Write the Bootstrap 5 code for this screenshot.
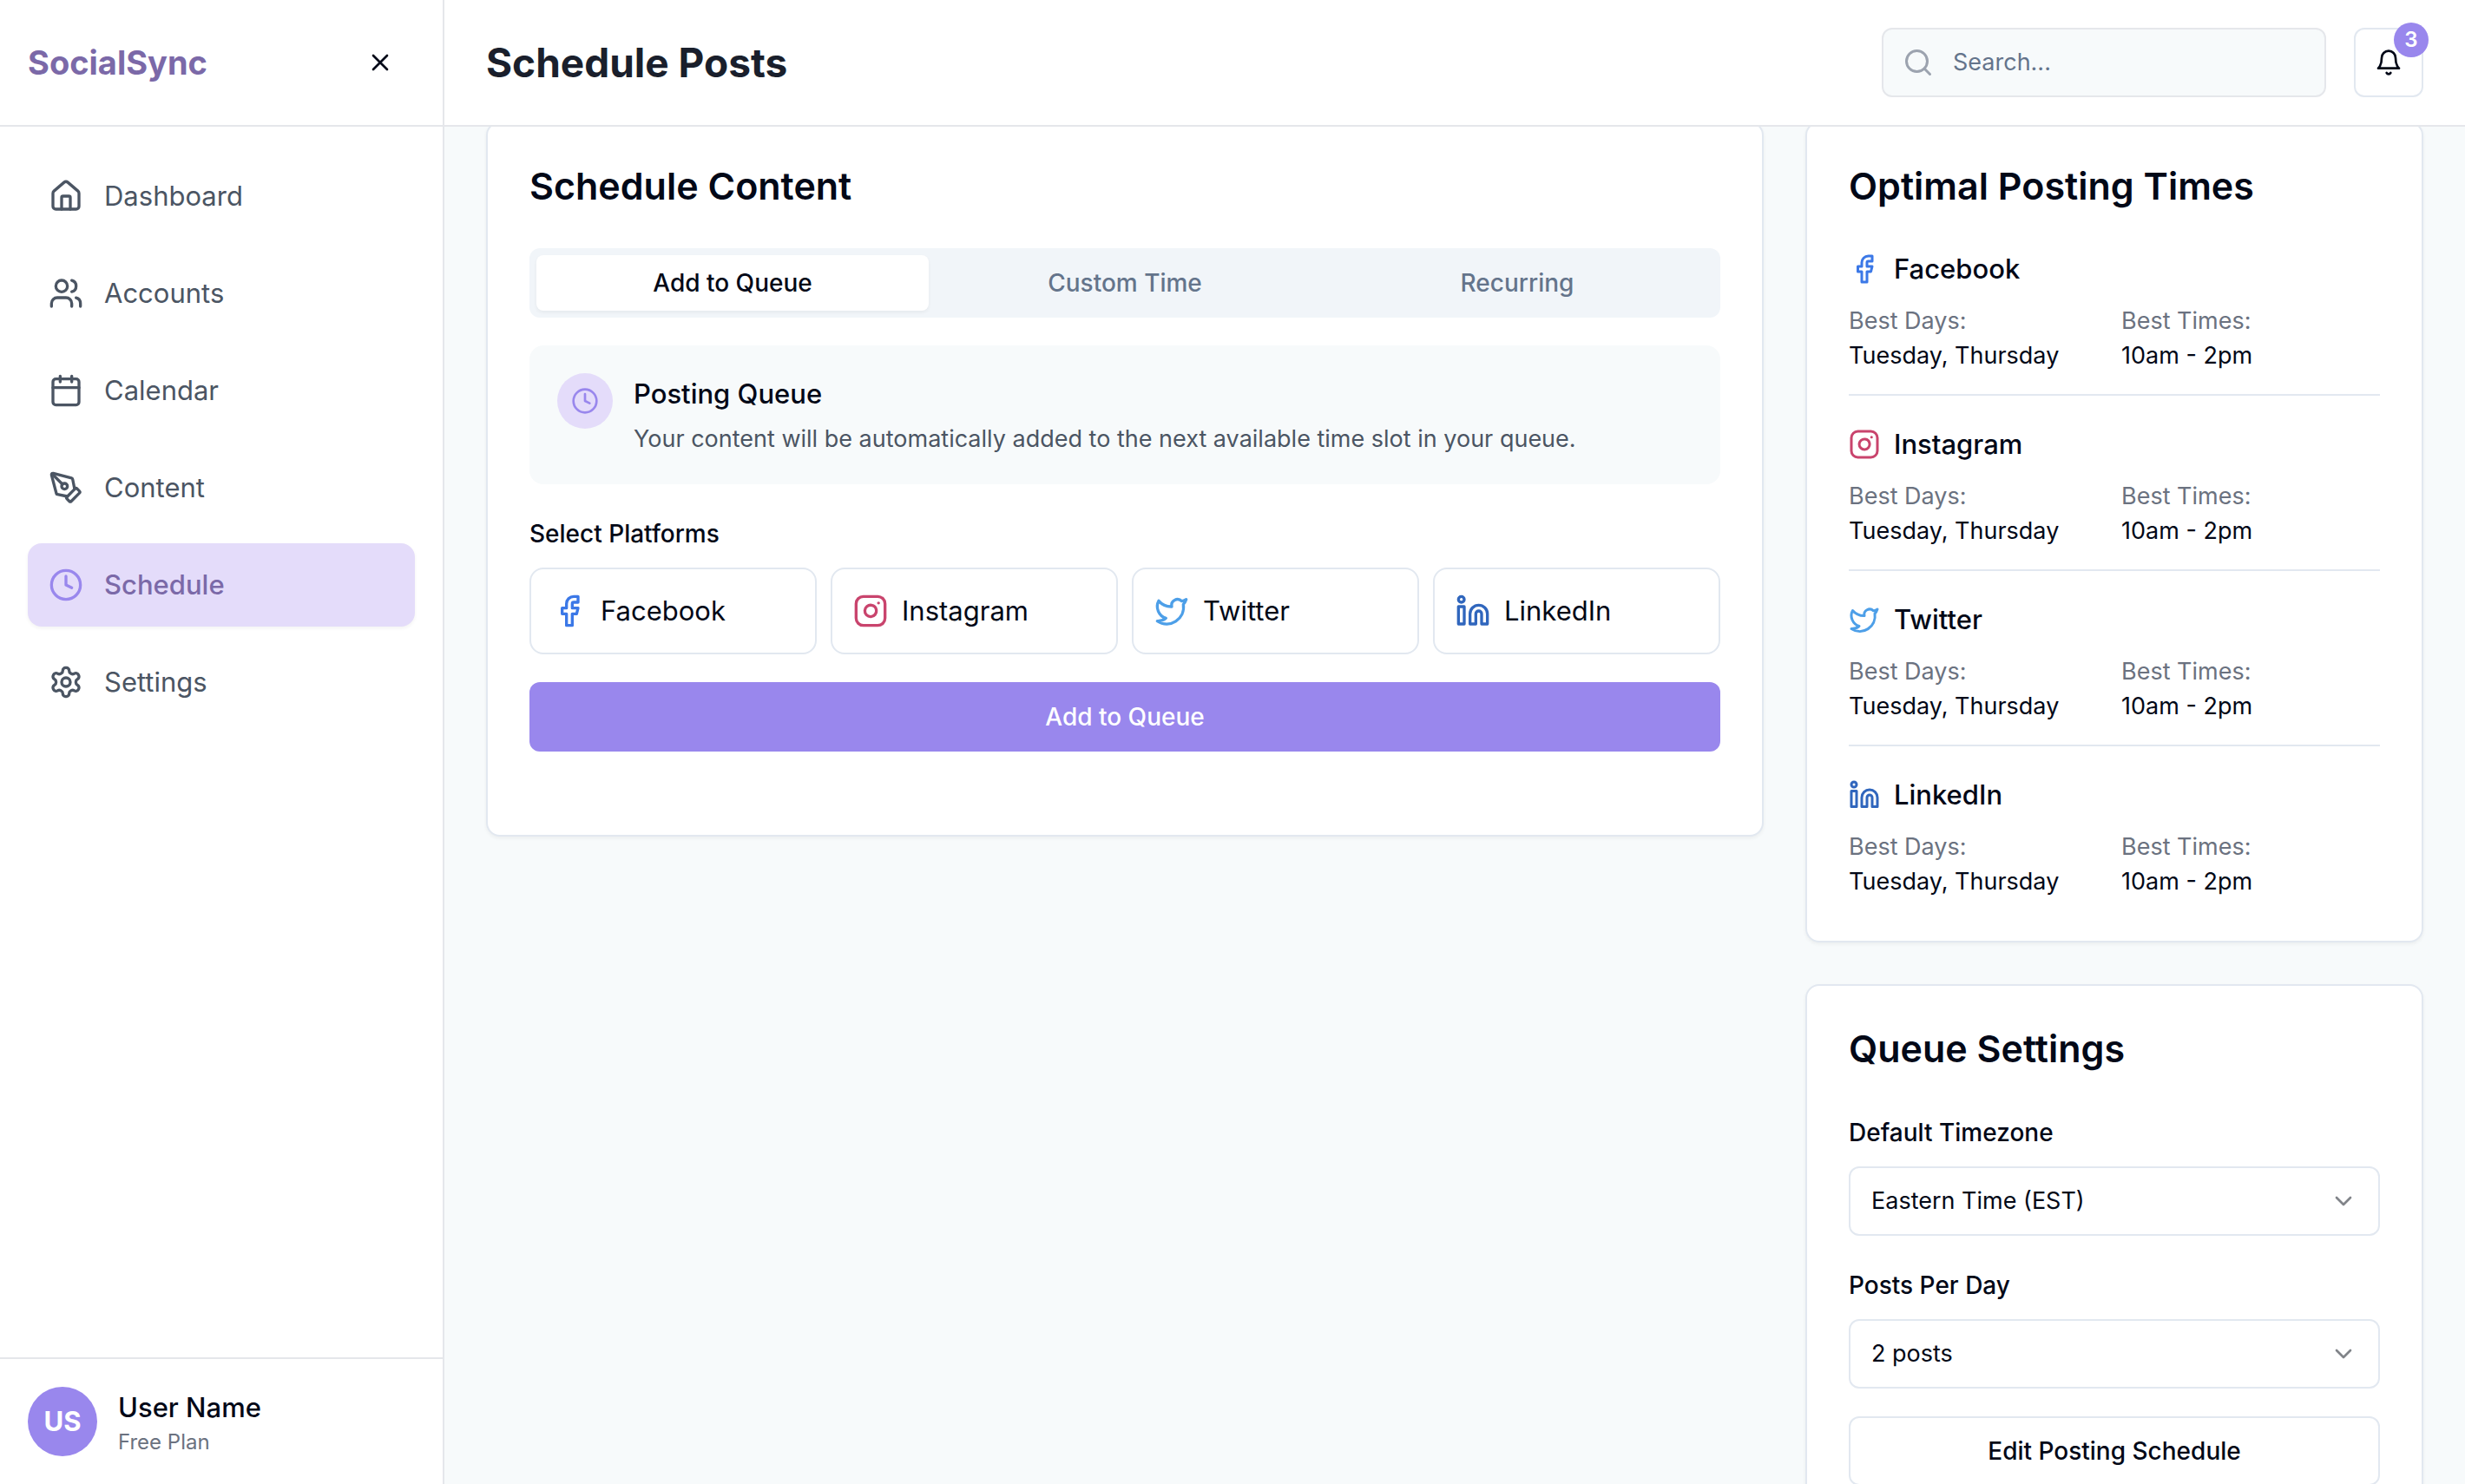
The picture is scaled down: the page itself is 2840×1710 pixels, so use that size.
<!DOCTYPE html>
<html lang="en">
<head>
<meta charset="utf-8">
<meta name="viewport" content="width=device-width, initial-scale=1">
<title>SocialSync – Schedule Posts</title>
<link href="https://cdn.jsdelivr.net/npm/bootstrap@5.3.0/dist/css/bootstrap.min.css" rel="stylesheet">
<style>
  :root {
    --ink: #020817;
    --line: #e2e8f0;
    --line-gray: #e5e7eb;
    --brand: #9987ed;
    --brand-deep: #7b69a8;
    --brand-soft: #e4dcfa;
    --canvas: #f7fafb;
  }
  body { font-family: Inter, "Noto Sans", sans-serif; font-size: 31px; line-height: 48px; color: var(--ink); background: var(--canvas); }
  svg { fill: none; stroke: currentColor; stroke-width: 2; stroke-linecap: round; stroke-linejoin: round; flex: none; display: block; }
  .ico-32 { width: 32px; height: 32px; }
  .ico-36 { width: 36px; height: 36px; }
  .ico-40 { width: 40px; height: 40px; }
  .shell { height: 100vh; }
  .text-28 { font-size: 28px; line-height: 40px; }
  .text-27 { font-size: 27px; line-height: 40px; }
  .text-24 { font-size: 24px; line-height: 32px; }
  .gap-16 { gap: 16px; }
  .gap-24 { gap: 24px; }
  .gap-32 { gap: 32px; }
  .gap-48 { gap: 48px; }

  .side-panel { width: 512px; border-right: 2px solid var(--line-gray); }
  .bar { height: 146px; padding: 0 32px; border-bottom: 2px solid var(--line-gray); flex: none; }
  .bar-top { padding: 0 48px; }
  .brand-name { font-size: 38px; line-height: 56px; color: var(--brand-deep); }
  .page-title { font-size: 46px; line-height: 64px; color: #1a1f2c; }
  .square-btn { width: 80px; height: 80px; padding: 0; border-radius: 12px; color: var(--ink); }
  .square-btn.outlined { border: 2px solid var(--line); background: #fff; }
  .side-nav { padding: 32px; }
  .side-nav .nav-link { padding: 24px; border-radius: 16px; color: #4b5563; }
  .side-nav .nav-link.active { background: var(--brand-soft); color: var(--brand-deep); font-weight: 500; box-shadow: 0 2px 4px rgba(0,0,0,.05); }
  .side-nav .nav-link.active svg { color: var(--brand); }
  .side-user { padding: 32px; border-top: 2px solid var(--line-gray); }
  .user-name { font-weight: 500; }
  .avatar { width: 80px; height: 80px; background: var(--brand); }
  .muted { color: #6b7280; }

  .search-box { width: 512px; height: 80px; border: 2px solid var(--line-gray); border-radius: 12px; background: var(--canvas); padding: 0 22px; gap: 22px; }
  .search-box svg { color: #9ca3af; }
  .search-box input { min-width: 0; outline: 0; color: var(--ink); }
  .search-box input::placeholder { color: #64748b; opacity: 1; }
  .count-badge { top: -8px; right: -8px; width: 40px; height: 40px; background: var(--brand); color: #fff; font-weight: 600; }

  .content-area { padding: 48px; scrollbar-width: none; }
  .content-area::-webkit-scrollbar { display: none; }
  .main-row { --bs-gutter-x: 48px; }
  .tight-row { --bs-gutter-x: 16px; }
  .panel { border: 2px solid var(--line); border-radius: 16px; box-shadow: 0 2px 4px rgba(0,0,0,.05); padding: 48px; color: var(--ink); }
  .panel-tall { padding-bottom: 96px; }
  .panel-title { font-size: 43px; line-height: 48px; font-weight: 600; margin-bottom: 48px; }
  .tab-strip { background: #f1f5f9; border-radius: 12px; padding: 8px; }
  .tab-strip .nav-link { height: 64px; padding: 0; border-radius: 8px; font-weight: 500; color: #64748b; }
  .tab-strip .nav-link.active { background: #fff; color: var(--ink); box-shadow: 0 2px 4px rgba(0,0,0,.05); }
  .queue-note { background: var(--canvas); border-radius: 16px; padding: 32px; }
  .note-icon { width: 64px; height: 64px; background: var(--brand-soft); color: var(--brand); }
  .note-title { font-size: 31px; line-height: 48px; font-weight: 500; margin-bottom: 8px; }
  .note-text { color: #4b5563; }
  .field-label { font-size: 28px; line-height: 40px; font-weight: 500; }
  .platform-btn { padding: 24px; border: 2px solid var(--line); border-radius: 16px; background: #fff; font-size: 31px; line-height: 48px; color: var(--ink); }
  .wide-btn { height: 80px; border-radius: 12px; font-size: 28px; line-height: 40px; font-weight: 500; }
  .wide-btn.solid { background: var(--brand); color: #fff; }
  .wide-btn.outlined { border: 2px solid var(--line); background: #fff; color: var(--ink); }
  .c-facebook { color: #3b78e7; }
  .c-instagram { color: #c9446d; }
  .c-twitter { color: #4d9fe8; }
  .c-linkedin { color: #3066bd; }
  .slot-item + .slot-item { padding-top: 32px; }
  .slot-item:not(:last-child) { padding-bottom: 24px; border-bottom: 2px solid var(--line); }
  .slot-name { font-size: 31px; line-height: 48px; font-weight: 500; margin-bottom: 16px; }
  .pick { height: 80px; border: 2px solid var(--line); border-radius: 12px; padding: 0 80px 0 24px; font-size: 27px; line-height: 40px; color: var(--ink);
    --bs-form-select-bg-img: url("data:image/svg+xml,%3csvg xmlns='http://www.w3.org/2000/svg' viewBox='0 0 24 24' fill='none' stroke='%23818489' stroke-width='2' stroke-linecap='round' stroke-linejoin='round'%3e%3cpath d='m6 9 6 6 6-6'/%3e%3c/svg%3e");
    background-position: right 24px center; background-size: 32px 32px; }
</style>
</head>
<body>
<svg class="d-none" aria-hidden="true">
  <symbol id="i-x" viewBox="0 0 24 24"><path d="M18 6 6 18M6 6l12 12"/></symbol>
  <symbol id="i-home" viewBox="0 0 24 24"><path d="M15 21v-8a1 1 0 0 0-1-1h-4a1 1 0 0 0-1 1v8"/><path d="M3 10a2 2 0 0 1 .709-1.528l7-5.999a2 2 0 0 1 2.582 0l7 5.999A2 2 0 0 1 21 10v9a2 2 0 0 1-2 2H5a2 2 0 0 1-2-2z"/></symbol>
  <symbol id="i-users" viewBox="0 0 24 24"><path d="M16 21v-2a4 4 0 0 0-4-4H6a4 4 0 0 0-4 4v2"/><circle cx="9" cy="7" r="4"/><path d="M22 21v-2a4 4 0 0 0-3-3.87M16 3.13a4 4 0 0 1 0 7.75"/></symbol>
  <symbol id="i-calendar" viewBox="0 0 24 24"><path d="M8 2v4M16 2v4"/><rect width="18" height="18" x="3" y="4" rx="2"/><path d="M3 10h18"/></symbol>
  <symbol id="i-pen" viewBox="0 0 24 24"><path d="M15.707 21.293a1 1 0 0 1-1.414 0l-1.586-1.586a1 1 0 0 1 0-1.414l5.586-5.586a1 1 0 0 1 1.414 0l1.586 1.586a1 1 0 0 1 0 1.414z"/><path d="m18 13-1.375-6.874a1 1 0 0 0-.746-.776L3.235 2.028a1 1 0 0 0-1.207 1.207L5.35 15.879a1 1 0 0 0 .776.746L13 18"/><path d="m2.3 2.3 7.286 7.286"/><circle cx="11" cy="11" r="2"/></symbol>
  <symbol id="i-clock" viewBox="0 0 24 24"><circle cx="12" cy="12" r="10"/><path d="M12 6v6l4 2"/></symbol>
  <symbol id="i-gear" viewBox="0 0 24 24"><path d="M12.22 2h-.44a2 2 0 0 0-2 2v.18a2 2 0 0 1-1 1.73l-.43.25a2 2 0 0 1-2 0l-.15-.08a2 2 0 0 0-2.73.73l-.22.38a2 2 0 0 0 .73 2.73l.15.1a2 2 0 0 1 1 1.72v.51a2 2 0 0 1-1 1.74l-.15.09a2 2 0 0 0-.73 2.73l.22.38a2 2 0 0 0 2.73.73l.15-.08a2 2 0 0 1 2 0l.43.25a2 2 0 0 1 1 1.73V20a2 2 0 0 0 2 2h.44a2 2 0 0 0 2-2v-.18a2 2 0 0 1 1-1.73l.43-.25a2 2 0 0 1 2 0l.15.08a2 2 0 0 0 2.73-.73l.22-.39a2 2 0 0 0-.73-2.73l-.15-.08a2 2 0 0 1-1-1.74v-.5a2 2 0 0 1 1-1.74l.15-.09a2 2 0 0 0 .73-2.73l-.22-.38a2 2 0 0 0-2.73-.73l-.15.08a2 2 0 0 1-2 0l-.43-.25a2 2 0 0 1-1-1.73V4a2 2 0 0 0-2-2z"/><circle cx="12" cy="12" r="3"/></symbol>
  <symbol id="i-search" viewBox="0 0 24 24"><circle cx="11" cy="11" r="8"/><path d="m21 21-4.3-4.3"/></symbol>
  <symbol id="i-bell" viewBox="0 0 24 24"><path d="M10.268 21a2 2 0 0 0 3.464 0"/><path d="M6 8a6 6 0 0 1 12 0c0 7 3 9 3 9H3s3-2 3-9"/></symbol>
  <symbol id="i-facebook" viewBox="0 0 24 24"><path d="M18 2h-3a5 5 0 0 0-5 5v3H7v4h3v8h4v-8h3l1-4h-4V7a1 1 0 0 1 1-1h3z"/></symbol>
  <symbol id="i-instagram" viewBox="0 0 24 24"><rect width="20" height="20" x="2" y="2" rx="5"/><path d="M16 11.37A4 4 0 1 1 12.63 8 4 4 0 0 1 16 11.37z"/><path d="M17.5 6.5h.01"/></symbol>
  <symbol id="i-twitter" viewBox="0 0 24 24"><path d="M22 4s-.7 2.1-2 3.4c1.6 10-9.4 17.3-18 11.6 2.2.1 4.4-.6 6-2C3 15.5.5 9.6 3 5c2.2 2.6 5.6 4.1 9 4-.9-4.2 4-6.6 7-3.8 1.1 0 3-1.2 3-1.2z"/></symbol>
  <symbol id="i-linkedin" viewBox="0 0 24 24"><path d="M16 8a6 6 0 0 1 6 6v7h-4v-7a2 2 0 0 0-4 0v7h-4v-7a6 6 0 0 1 6-6z"/><rect width="4" height="12" x="2" y="9"/><circle cx="4" cy="4" r="2"/></symbol>
</svg>

<div class="shell d-flex overflow-hidden">
  <aside class="side-panel d-flex flex-column flex-shrink-0 bg-white">
    <div class="bar d-flex align-items-center justify-content-between">
      <div class="brand-name fw-bold">SocialSync</div>
      <button type="button" class="btn square-btn d-flex align-items-center justify-content-center" aria-label="Close sidebar"><svg class="ico-32"><use href="#i-x"/></svg></button>
    </div>
    <nav class="side-nav nav flex-column flex-nowrap flex-grow-1 gap-16">
      <a class="nav-link d-flex align-items-center gap-24" href="#"><svg class="ico-40"><use href="#i-home"/></svg>Dashboard</a>
      <a class="nav-link d-flex align-items-center gap-24" href="#"><svg class="ico-40"><use href="#i-users"/></svg>Accounts</a>
      <a class="nav-link d-flex align-items-center gap-24" href="#"><svg class="ico-40"><use href="#i-calendar"/></svg>Calendar</a>
      <a class="nav-link d-flex align-items-center gap-24" href="#"><svg class="ico-40"><use href="#i-pen"/></svg>Content</a>
      <a class="nav-link active d-flex align-items-center gap-24" href="#" aria-current="page"><svg class="ico-40"><use href="#i-clock"/></svg>Schedule</a>
      <a class="nav-link d-flex align-items-center gap-24" href="#"><svg class="ico-40"><use href="#i-gear"/></svg>Settings</a>
    </nav>
    <div class="side-user d-flex align-items-center gap-24">
      <div class="avatar rounded-circle d-flex align-items-center justify-content-center text-white fw-bold">US</div>
      <div>
        <div class="user-name">User Name</div>
        <div class="text-24 muted">Free Plan</div>
      </div>
    </div>
  </aside>

  <div class="d-flex flex-column flex-grow-1 overflow-hidden">
    <header class="bar bar-top d-flex align-items-center justify-content-between bg-white">
      <h1 class="page-title fw-bold mb-0">Schedule Posts</h1>
      <div class="d-flex align-items-center gap-32">
        <label class="search-box d-flex align-items-center">
          <svg class="ico-36"><use href="#i-search"/></svg>
          <input type="search" class="text-27 border-0 bg-transparent p-0 flex-grow-1" placeholder="Search..." aria-label="Search">
        </label>
        <button type="button" class="btn square-btn outlined position-relative d-flex align-items-center justify-content-center" aria-label="Notifications">
          <svg class="ico-32"><use href="#i-bell"/></svg>
          <span class="count-badge text-24 rounded-circle position-absolute d-flex align-items-center justify-content-center">3</span>
        </button>
      </div>
    </header>

    <main class="content-area flex-grow-1 overflow-auto" id="content">
      <div class="row main-row align-items-start">
        <div class="col-lg-8">
          <section class="panel panel-tall bg-white">
            <h2 class="panel-title">Schedule Content</h2>
            <div class="d-flex flex-column gap-32">
              <div class="tab-strip nav nav-pills nav-fill flex-nowrap" role="tablist">
                <button type="button" class="nav-link active text-28 w-100" role="tab" aria-selected="true">Add to Queue</button>
                <button type="button" class="nav-link text-28 w-100" role="tab" aria-selected="false">Custom Time</button>
                <button type="button" class="nav-link text-28 w-100" role="tab" aria-selected="false">Recurring</button>
              </div>
              <div class="queue-note d-flex align-items-start gap-24">
                <div class="note-icon rounded-circle d-flex align-items-center justify-content-center flex-shrink-0"><svg class="ico-32"><use href="#i-clock"/></svg></div>
                <div>
                  <h3 class="note-title">Posting Queue</h3>
                  <p class="note-text text-27 mb-0">Your content will be automatically added to the next available time slot in your queue.</p>
                </div>
              </div>
              <div class="d-flex flex-column gap-16" role="group" aria-labelledby="platforms-label">
                <div><span class="field-label" id="platforms-label">Select Platforms</span></div>
                <div class="row tight-row">
                  <div class="col-3"><button type="button" class="platform-btn w-100 d-flex align-items-center gap-16"><svg class="ico-40 c-facebook"><use href="#i-facebook"/></svg>Facebook</button></div>
                  <div class="col-3"><button type="button" class="platform-btn w-100 d-flex align-items-center gap-16"><svg class="ico-40 c-instagram"><use href="#i-instagram"/></svg>Instagram</button></div>
                  <div class="col-3"><button type="button" class="platform-btn w-100 d-flex align-items-center gap-16"><svg class="ico-40 c-twitter"><use href="#i-twitter"/></svg>Twitter</button></div>
                  <div class="col-3"><button type="button" class="platform-btn w-100 d-flex align-items-center gap-16"><svg class="ico-40 c-linkedin"><use href="#i-linkedin"/></svg>LinkedIn</button></div>
                </div>
              </div>
              <button type="button" class="btn wide-btn solid w-100">Add to Queue</button>
            </div>
          </section>
        </div>

        <div class="col-lg-4 d-flex flex-column gap-48">
          <section class="panel bg-white">
            <h2 class="panel-title">Optimal Posting Times</h2>
            <div class="slot-item">
              <h3 class="slot-name d-flex align-items-center gap-16"><svg class="ico-36 c-facebook"><use href="#i-facebook"/></svg>Facebook</h3>
              <div class="row tight-row text-27">
                <div class="col-6"><div class="muted">Best Days:</div><div>Tuesday, Thursday</div></div>
                <div class="col-6"><div class="muted">Best Times:</div><div>10am - 2pm</div></div>
              </div>
            </div>
            <div class="slot-item">
              <h3 class="slot-name d-flex align-items-center gap-16"><svg class="ico-36 c-instagram"><use href="#i-instagram"/></svg>Instagram</h3>
              <div class="row tight-row text-27">
                <div class="col-6"><div class="muted">Best Days:</div><div>Tuesday, Thursday</div></div>
                <div class="col-6"><div class="muted">Best Times:</div><div>10am - 2pm</div></div>
              </div>
            </div>
            <div class="slot-item">
              <h3 class="slot-name d-flex align-items-center gap-16"><svg class="ico-36 c-twitter"><use href="#i-twitter"/></svg>Twitter</h3>
              <div class="row tight-row text-27">
                <div class="col-6"><div class="muted">Best Days:</div><div>Tuesday, Thursday</div></div>
                <div class="col-6"><div class="muted">Best Times:</div><div>10am - 2pm</div></div>
              </div>
            </div>
            <div class="slot-item">
              <h3 class="slot-name d-flex align-items-center gap-16"><svg class="ico-36 c-linkedin"><use href="#i-linkedin"/></svg>LinkedIn</h3>
              <div class="row tight-row text-27">
                <div class="col-6"><div class="muted">Best Days:</div><div>Tuesday, Thursday</div></div>
                <div class="col-6"><div class="muted">Best Times:</div><div>10am - 2pm</div></div>
              </div>
            </div>
          </section>

          <section class="panel bg-white">
            <h2 class="panel-title">Queue Settings</h2>
            <div class="d-flex flex-column gap-32">
              <div class="d-flex flex-column gap-16">
                <div><label class="field-label" for="timezone">Default Timezone</label></div>
                <select class="form-select pick" id="timezone"><option>Eastern Time (EST)</option><option>Central Time (CST)</option><option>Pacific Time (PST)</option></select>
              </div>
              <div class="d-flex flex-column gap-16">
                <div><label class="field-label" for="per-day">Posts Per Day</label></div>
                <select class="form-select pick" id="per-day"><option>2 posts</option><option>3 posts</option><option>4 posts</option></select>
              </div>
              <button type="button" class="btn wide-btn outlined w-100">Edit Posting Schedule</button>
            </div>
          </section>
        </div>
      </div>
    </main>
  </div>
</div>
<script src="https://cdn.jsdelivr.net/npm/bootstrap@5.3.0/dist/js/bootstrap.bundle.min.js"></script>
<script>
  // Open with the first row of cards tucked just under the header.
  document.getElementById('content').scrollTop = 54;
</script>
</body>
</html>
